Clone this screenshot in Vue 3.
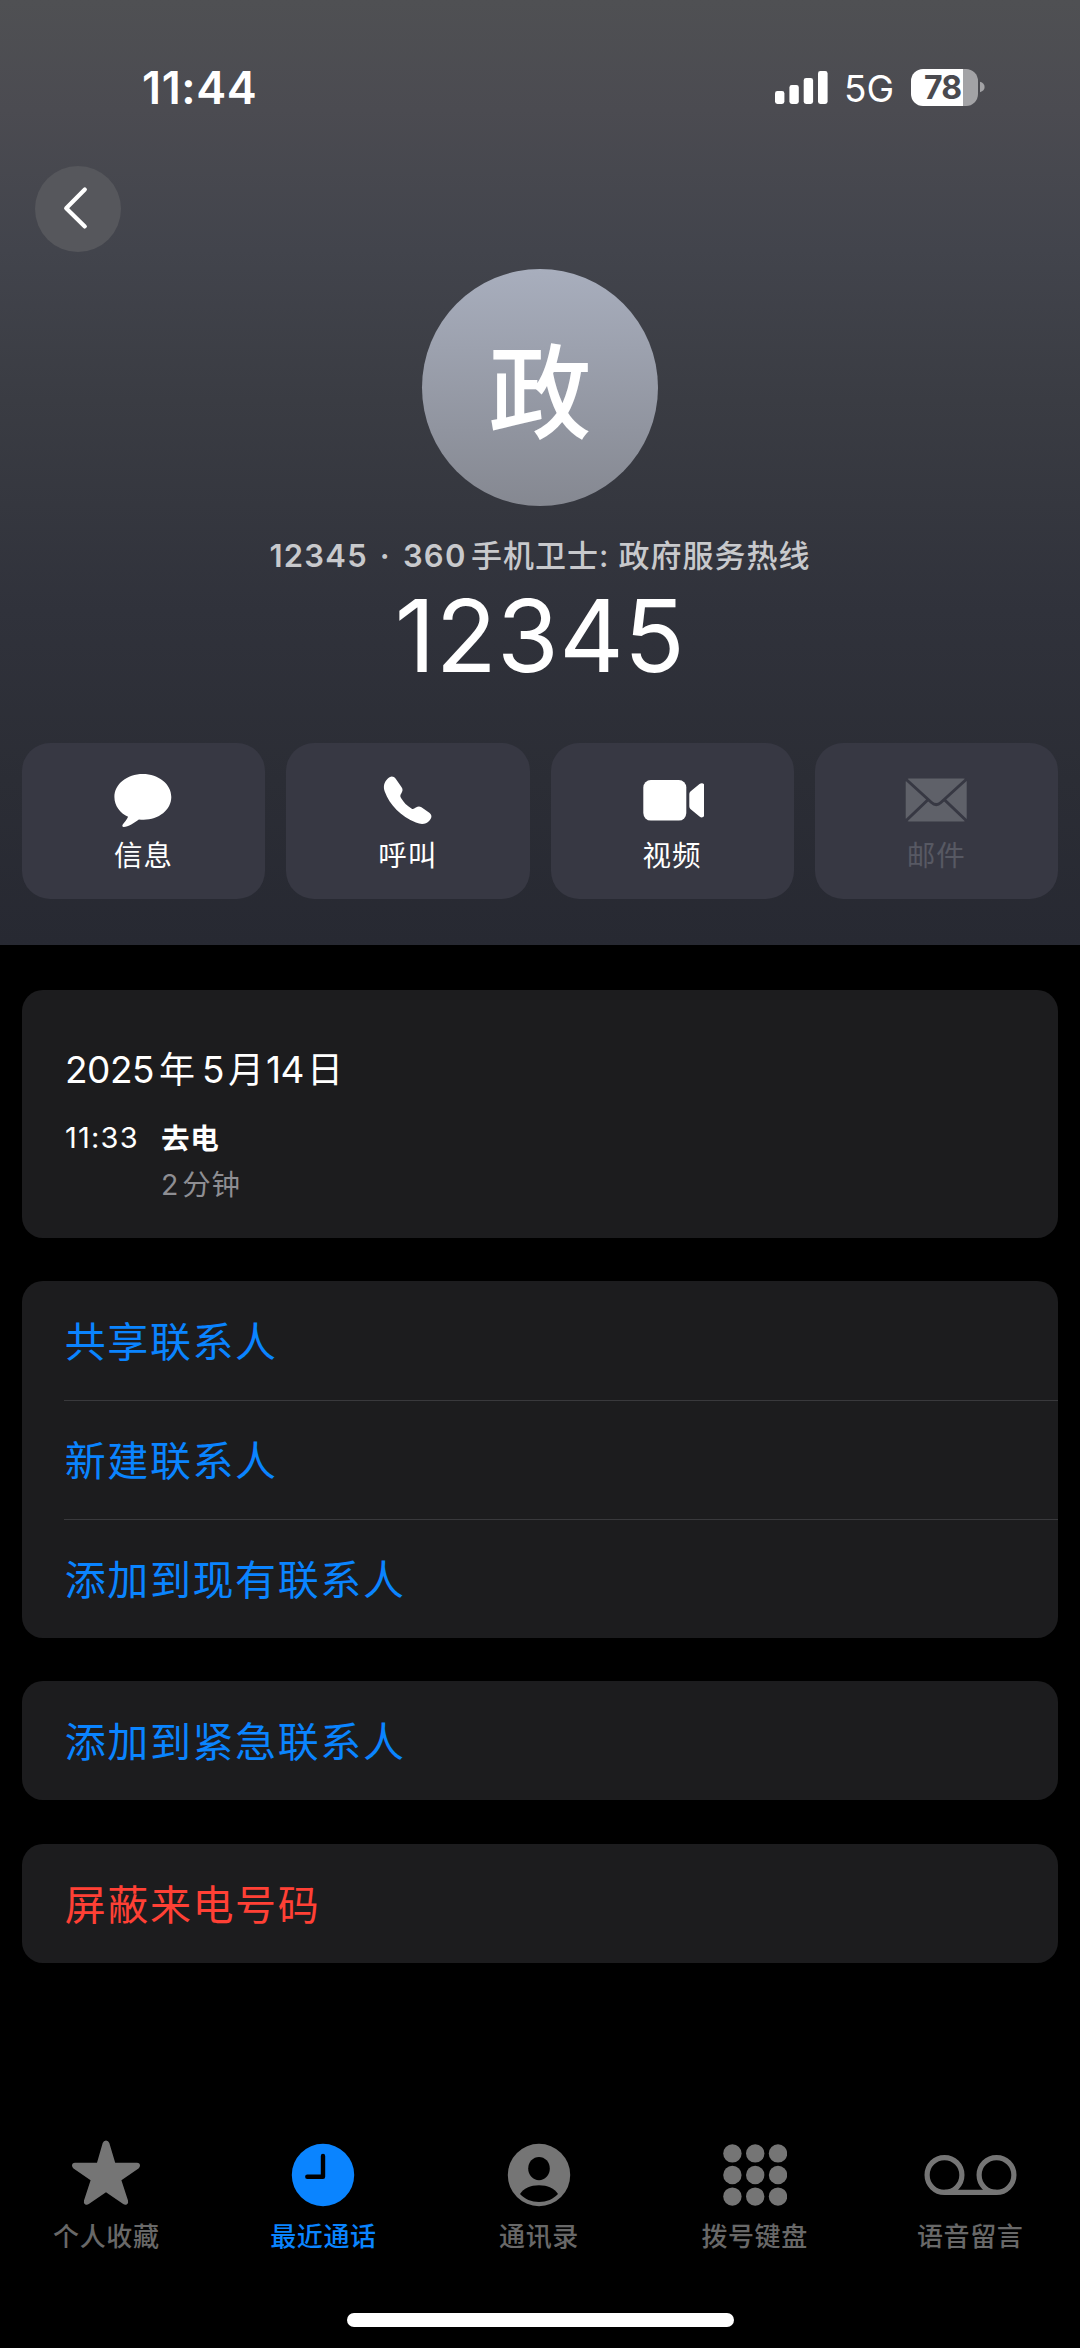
<script setup>
const actions = [
  { id: 'message', label: '信息' },
  { id: 'call', label: '呼叫' },
  { id: 'video', label: '视频' },
  { id: 'mail', label: '邮件', disabled: true },
]

const groups = [
  { rows: ['共享联系人', '新建联系人', '添加到现有联系人'] },
  { rows: ['添加到紧急联系人'] },
  { rows: ['屏蔽来电号码'], danger: true },
]

const tabs = [
  { id: 'favorites', label: '个人收藏' },
  { id: 'recents', label: '最近通话', active: true },
  { id: 'contacts', label: '通讯录' },
  { id: 'keypad', label: '拨号键盘' },
  { id: 'voicemail', label: '语音留言' },
]

const dots = [9.4, 32.2, 55].flatMap((x) => [9.4, 31, 52.6].map((y) => ({ x, y })))
</script>

<template>
  <div class="screen">
    <header class="hero">
      <div class="status">
        <span class="time">11:44</span>
        <div class="indicators">
          <svg class="signal" width="53" height="34" viewBox="0 0 53 34" fill="#fff">
            <rect x="0" y="20" width="9.4" height="13" rx="2.4" />
            <rect x="14.4" y="14" width="9.4" height="19" rx="2.4" />
            <rect x="28.7" y="7" width="9.4" height="26" rx="2.4" />
            <rect x="43" y="0" width="9.6" height="33" rx="2.4" />
          </svg>
          <span class="network">5G</span>
          <div class="battery"><span class="level">78</span></div>
          <svg class="nub" width="5" height="12" viewBox="0 0 5 12"><path d="M0 .8Q4.6 2.2 4.6 6T0 11.2Z" fill="#a3a3a6" /></svg>
        </div>
      </div>

      <div class="nav">
        <button class="back" aria-label="返回">
          <svg width="86" height="86" viewBox="0 0 86 86" fill="none" stroke="#fff" stroke-width="4.2" stroke-linecap="round" stroke-linejoin="round">
            <path d="M49.800 23.500 31.200 42.200 49.800 60.400" />
          </svg>
        </button>
      </div>

      <div class="avatar">政</div>
      <p class="subtitle"><span class="sub-num">12345 · 360</span><span class="sub-text">手机卫士</span><span class="sub-colon">:</span><span class="sub-text">政府服务热线</span></p>
      <h1 class="number">12345</h1>

      <div class="actions">
        <button v-for="a in actions" :key="a.id" class="action" :class="{ disabled: a.disabled }">
          <svg v-if="a.id === 'message'" class="glyph" width="64" height="56" viewBox="1.2 0 64 56" fill="currentColor">
            <path d="M32 1C47.8 1 60.5 11.2 60.5 24S48 46.7 32.8 46.7c-1.7 0-3.2-.2-4.700-.3C23.500 49.500 17.500 53.800 13 54c-1.600.1-1.900-1.500-.9-2.700 1.800-2.100 4-4.600 5.200-7.500C9.300 40.200 3.600 32.800 3.600 24 3.600 11.200 16.200 1 32 1Z" />
          </svg>
          <svg v-else-if="a.id === 'call'" class="glyph" width="64" height="56" viewBox="0.8 0.5 65 57" fill="currentColor">
            <path d="M12.300 6.700c2.600-3.100 6.100-3.600 8.500-.3l6 8.700c1.500 2.200 1.100 3.800-.2 6-1.300 2.100-1.500 2.900-.4 4.800 2.600 4.400 6.100 8 10.600 10.700 1.600 1 2.500.5 4.500-.9 2.100-1.400 3.600-1.700 5.700-.3l8 5.600c3.300 2.500 2.400 5.600 0 8.200-3.600 3.800-8.200 4.100-13.700 1.800C26 44.800 14.500 32.700 9.700 19.600c-2-5.400-.5-9.600 2.600-12.900Z" />
          </svg>
          <svg v-else-if="a.id === 'video'" class="glyph" width="64" height="56" viewBox="-2.100 0.500 64 56" fill="currentColor">
            <rect x="1.200" y="7.500" width="43" height="40.600" rx="7.500" />
            <path d="M47.200 22c0-1.500.5-2.400 1.700-3.400l8.500-7c2-1.700 5-.9 5 1.800v28.800c0 2.700-3 3.500-5 1.800l-8.500-7c-1.200-1-1.700-1.900-1.700-3.400Z" />
          </svg>
          <svg v-else class="glyph" width="64" height="56" viewBox="-0.200 0.500 64 56">
            <rect x="1.500" y="6" width="61" height="43" rx="3.500" fill="currentColor" />
            <g fill="none" stroke="#373843" stroke-width="3">
              <path d="M1.500 6.500 27.300 30q4.700 4.300 9.400 0L62.500 6.500" />
              <path d="M1.500 48.500 23.500 27.500M62.500 48.500 40.500 27.500" />
            </g>
          </svg>
          <span class="action-label">{{ a.label }}</span>
        </button>
      </div>
    </header>

    <main class="body">
      <section class="card log">
        <h2 class="date"><span class="dn">2025</span><span class="dc year">年</span><span class="dn">5</span><span class="dc month">月</span><span class="dn">14</span><span class="dc day">日</span></h2>
        <div class="entry">
          <span class="entry-time">11:33</span>
          <div class="entry-info">
            <span class="entry-kind">去电</span>
            <span class="entry-duration"><span class="count">2</span>分钟</span>
          </div>
        </div>
      </section>

      <section v-for="(g, i) in groups" :key="i" class="card group" :class="{ danger: g.danger }">
        <div v-for="row in g.rows" :key="row" class="row">{{ row }}</div>
      </section>
    </main>

    <nav class="tabs">
      <a v-for="t in tabs" :key="t.id" class="tab" :class="[t.id, { active: t.active }]">
        <svg v-if="t.id === 'favorites'" class="tab-icon" width="72" height="68" viewBox="0 0 72 68" fill="currentColor">
          <path d="M27 22.700 32.700 3Q33.600.4 36 .4T39.300 3L45.200 22.700H67Q70 22.900 70 25.600 70 27.300 68.500 28.400L51.400 40.300 58 60.500Q58.600 63 57 64.200 55.200 65.300 53.200 64L36 52.300 18.800 64Q16.800 65.300 15 64.200 13.400 63 14 60.500L20.600 40.300 3.500 28.400Q2 27.300 2 25.600 2 22.900 5 22.700Z" />
        </svg>
        <svg v-else-if="t.id === 'recents'" class="tab-icon" width="64" height="68" viewBox="0 0 64 68">
          <circle cx="32" cy="35" r="31.200" fill="currentColor" />
          <path d="M32 16V36.700H16.300" fill="none" stroke="#000" stroke-width="4.400" stroke-linecap="round" stroke-linejoin="round" />
        </svg>
        <svg v-else-if="t.id === 'contacts'" class="tab-icon" width="64" height="68" viewBox="0 0 64 68">
          <circle cx="32" cy="35" r="31.200" fill="currentColor" />
          <ellipse cx="32" cy="28.600" rx="10.800" ry="11.700" fill="#000" />
          <path d="M13 54C16.500 48.500 23.500 45.300 32 45.300S47.500 48.500 51 54C46.500 59 39.500 62 32 62S17.500 59 13 54Z" fill="#000" />
        </svg>
        <svg v-else-if="t.id === 'keypad'" class="tab-icon" width="64" height="64" viewBox="0 0 64 64" fill="currentColor">
          <circle v-for="(d, k) in dots" :key="k" :cx="d.x" :cy="d.y" r="9.200" />
        </svg>
        <svg v-else class="tab-icon" width="94" height="68" viewBox="-0.500 0 94 68" fill="none" stroke="currentColor" stroke-width="5.200">
          <circle cx="21" cy="35" r="17.400" />
          <circle cx="73" cy="35" r="17.400" />
          <path d="M21 52.400H73" />
        </svg>
        <span class="tab-label">{{ t.label }}</span>
      </a>
    </nav>
    <div class="home"></div>
  </div>
</template>

<style>
html,
body {
  margin: 0;
  background: #000;
}
</style>

<style scoped>
.screen {
  display: flex;
  flex-direction: column;
  width: 1080px;
  height: 2348px;
  overflow: hidden;
  background: #000;
  color: #fff;
  font-family: Inter, 'Noto Sans CJK SC', sans-serif;
}

button {
  margin: 0;
  padding: 0;
  border: 0;
  background: none;
  color: inherit;
  font: inherit;
}

h1,
h2,
p {
  margin: 0;
  font-weight: 400;
}

.hero {
  display: flex;
  flex-direction: column;
  align-items: center;
  height: 945px;
  background: linear-gradient(#4f5053 0, #4b4b51 110px, #42444c 250px, #3a3c43 400px, #30323b 610px, #2b2d35 780px, #272932 945px);
}

.status {
  display: flex;
  justify-content: space-between;
  width: 100%;
  height: 166px;
  padding: 66px 95px 0 142px;
  box-sizing: border-box;
}

.time {
  font-size: 45px;
  font-weight: 600;
  line-height: 44px;
  letter-spacing: 0.6px;
}

.indicators {
  display: flex;
  align-items: flex-start;
}

.signal {
  margin-top: 5px;
}

.network {
  width: 67px;
  margin-left: 16px;
  font-size: 37px;
  line-height: 46px;
}

.battery {
  width: 67px;
  height: 37px;
  margin-top: 3px;
  border-radius: 12px;
  background: linear-gradient(90deg, #fff 52.5px, #a3a3a6 52.5px);
}

.level {
  display: block;
  padding-left: 13px;
  color: #4a4a4f;
  font-size: 32px;
  font-weight: 700;
  line-height: 37px;
  letter-spacing: -1px;
}

.nub {
  margin: 15px 0 0 2px;
}

.nav {
  display: flex;
  width: 100%;
  height: 103px;
  padding-left: 35px;
  box-sizing: border-box;
}

.back {
  width: 86px;
  height: 86px;
  border-radius: 50%;
  background: #56575c;
}

.back svg {
  display: block;
}

.avatar {
  width: 236px;
  height: 237px;
  border-radius: 50%;
  background: linear-gradient(#a8aebd, #858891);
  font-size: 103px;
  font-weight: 500;
  line-height: 249px;
  text-align: center;
}

.subtitle {
  display: flex;
  height: 40px;
  margin-top: 29px;
  color: #c8c9cc;
  font-size: 31px;
  font-weight: 500;
  line-height: 41px;
}

.sub-num {
  margin-right: 4.5px;
  font-weight: 600;
  letter-spacing: 1.2px;
  word-spacing: 3px;
}

.sub-text {
  letter-spacing: 1px;
}

.sub-colon {
  margin-right: 10px;
}

.number {
  height: 100px;
  margin-top: 11px;
  font-size: 100px;
  line-height: 100px;
  letter-spacing: 0.3px;
}

.actions {
  display: flex;
  gap: 21px;
  width: 1036px;
  margin-top: 56.5px;
}

.action {
  display: flex;
  flex: 1;
  flex-direction: column;
  align-items: center;
  height: 156.5px;
  padding-top: 30px;
  box-sizing: border-box;
  border-radius: 28px;
  background: #373843;
}

.glyph {
  display: block;
}

.action-label {
  margin-top: 7px;
  font-size: 28.5px;
  line-height: 40px;
  letter-spacing: 1px;
}

.disabled .glyph {
  color: #5f6169;
}

.disabled .action-label {
  color: #575963;
}

.body {
  display: flex;
  flex: 1;
  flex-direction: column;
  gap: 43.4px;
  padding: 45px 22px 0;
}

.card {
  border-radius: 21px;
  background: #1c1c1e;
}

.log {
  height: 248px;
  padding: 55px 43px 0;
  box-sizing: border-box;
}

.date {
  display: flex;
  height: 50px;
  font-size: 37px;
  line-height: 50px;
}

.dn {
  letter-spacing: -0.5px;
}

.dc {
  font-size: 36px;
}

.year {
  margin: 0 7px 0 5px;
}

.month {
  margin: 0 2px 0 4px;
}

.day {
  margin-left: 3px;
}

.entry {
  display: flex;
  margin-top: 22px;
  font-size: 29px;
  line-height: 42px;
}

.entry-time {
  width: 96px;
  letter-spacing: 1.2px;
}

.entry-info {
  display: flex;
  flex-direction: column;
  gap: 4px;
  padding-top: 1px;
  font-size: 28.5px;
  letter-spacing: 0.8px;
}

.entry-kind {
  font-weight: 700;
}

.entry-duration {
  color: #8e8e93;
}

.count {
  margin-right: 3px;
}

.group {
  color: #0a84ff;
}

.danger {
  color: #ff4035;
}

.row {
  height: 118.9px;
  margin-left: 42px;
  padding-left: 0.7px;
  box-sizing: border-box;
  font-size: 41px;
  line-height: 122px;
  letter-spacing: 1.6px;
}

.row + .row {
  border-top: 1px solid #39393c;
  line-height: 121px;
}

.tabs {
  display: flex;
  height: 174px;
  padding: 1px 2px 0 0;
  box-sizing: border-box;
  color: #757575;
}

.tab {
  display: flex;
  flex: none;
  flex-direction: column;
  align-items: center;
  width: 20%;
  box-sizing: border-box;
}

.favorites {
  padding-right: 3px;
}

.tab-icon {
  display: block;
}

.keypad {
  padding-top: 4px;
}

.tab-label {
  margin-top: 9px;
  color: #686868;
  font-size: 26px;
  font-weight: 500;
  line-height: 40px;
  letter-spacing: 0.6px;
}

.active,
.active .tab-label {
  color: #0a84ff;
}

.home {
  align-self: center;
  width: 387px;
  height: 13.5px;
  margin-bottom: 21.5px;
  border-radius: 7px;
  background: #fff;
}
</style>
